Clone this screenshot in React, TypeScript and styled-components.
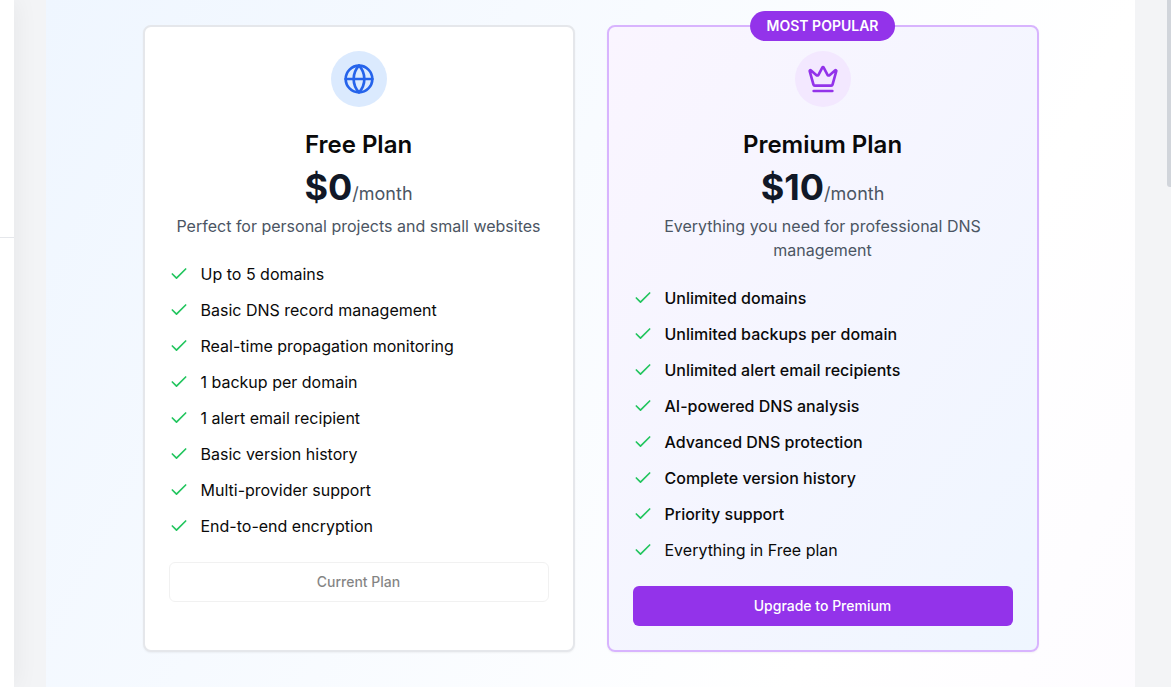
import React from "react";
import styled, { createGlobalStyle, css } from "styled-components";
import { Check, Crown, Globe } from "lucide-react";

const GlobalStyle = createGlobalStyle`
  *, *::before, *::after { box-sizing: border-box; }
  body {
    margin: 0;
    background: #f3f4f6;
    color: #0a0a0a;
    font-family: Inter, "Liberation Sans", sans-serif;
    font-size: 16px;
    line-height: 24px;
  }
`;

const Page = styled.div`
  display: flex;
  min-height: 100vh;
`;

const Sidebar = styled.aside`
  flex: 0 0 14px;
  background: #ffffff;
  box-shadow: 0 0 24px rgba(0, 0, 0, 0.08);
`;

const SidebarHeader = styled.div`
  height: 238px;
  border-bottom: 1px solid #e5e7eb;
`;

const Content = styled.main`
  flex: 1;
  display: flex;
  min-width: 0;
  padding: 0 32px;
`;

const PricingSection = styled.section`
  position: relative;
  flex: 1;
  padding: 25px 16px 32px;
  background: linear-gradient(117deg, #eff6ff 0, #ffffff 974px, #faf5ff 1948px);
`;

const PlanGrid = styled.div`
  display: grid;
  grid-template-columns: repeat(2, minmax(0, 1fr));
  gap: 32px;
  max-width: 896px;
  margin: 0 auto;
`;

const Card = styled.article<{ $featured?: boolean }>`
  position: relative;
  padding: 24px;
  border: 2px solid #e5e7eb;
  border-radius: 8px;
  background: #ffffff;
  box-shadow: 0 1px 2px rgba(0, 0, 0, 0.05);
  ${({ $featured }) =>
    $featured &&
    css`
      border-color: #d8b4fe;
      background: linear-gradient(to bottom right, #faf5ff, #eff6ff);
    `}
`;

const Badge = styled.span`
  position: absolute;
  top: -16px;
  left: 50%;
  transform: translateX(-50%);
  padding: 5px 17px;
  border-radius: 15px;
  background: #9333ea;
  color: #ffffff;
  font-size: 14px;
  font-weight: 600;
  line-height: 20px;
  white-space: nowrap;
`;

const CardHeader = styled.header`
  display: flex;
  flex-direction: column;
  align-items: center;
  text-align: center;
`;

const IconCircle = styled.div<{ $featured?: boolean }>`
  display: flex;
  padding: 12px;
  border-radius: 50%;
  background: ${({ $featured }) => ($featured ? "#f3e8ff" : "#dbeafe")};
  color: ${({ $featured }) => ($featured ? "#9333ea" : "#2563eb")};
`;

const PlanName = styled.h2`
  margin: 22px 0 6px;
  font-size: 24px;
  font-weight: 600;
  line-height: 32px;
`;

const Price = styled.p`
  margin: 0;
  color: #111827;
  font-size: 36px;
  font-weight: 700;
  line-height: 40px;
`;

const Period = styled.span`
  color: #4b5563;
  font-size: 18px;
  font-weight: 400;
`;

const Description = styled.p`
  margin: 0;
  color: #4b5563;
`;

const FeatureList = styled.ul`
  display: flex;
  flex-direction: column;
  gap: 12px;
  margin: 24px 0;
  padding: 0;
  list-style: none;
`;

const Feature = styled.li<{ $strong?: boolean }>`
  display: flex;
  align-items: center;
  gap: 12px;
  font-weight: ${({ $strong }) => ($strong ? 500 : 400)};

  svg {
    flex: none;
    color: #22c55e;
  }
`;

const PlanButton = styled.button`
  display: block;
  width: 100%;
  height: 40px;
  border: 0;
  border-radius: 6px;
  background: #9333ea;
  color: #ffffff;
  font-family: inherit;
  font-size: 14px;
  font-weight: 500;
  line-height: 20px;
  cursor: pointer;

  &:disabled {
    border: 1px solid #e5e5e5;
    background: #ffffff;
    color: #0a0a0a;
    opacity: 0.5;
    cursor: default;
  }
`;

const ScrollTrack = styled.div`
  flex: 0 0 4px;
`;

const ScrollThumb = styled.div`
  height: 187px;
  border-radius: 0 0 0 3px;
  background: #d1d5db;
`;

type FeatureItem = { label: string; strong?: boolean };

type Plan = {
  name: string;
  price: string;
  description: string;
  features: FeatureItem[];
  action: string;
  current?: boolean;
  featured?: boolean;
};

const plans: Plan[] = [
  {
    name: "Free Plan",
    price: "$0",
    description: "Perfect for personal projects and small websites",
    features: [
      { label: "Up to 5 domains" },
      { label: "Basic DNS record management" },
      { label: "Real-time propagation monitoring" },
      { label: "1 backup per domain" },
      { label: "1 alert email recipient" },
      { label: "Basic version history" },
      { label: "Multi-provider support" },
      { label: "End-to-end encryption" },
    ],
    action: "Current Plan",
    current: true,
  },
  {
    name: "Premium Plan",
    price: "$10",
    description: "Everything you need for professional DNS management",
    features: [
      { label: "Unlimited domains", strong: true },
      { label: "Unlimited backups per domain", strong: true },
      { label: "Unlimited alert email recipients", strong: true },
      { label: "AI-powered DNS analysis", strong: true },
      { label: "Advanced DNS protection", strong: true },
      { label: "Complete version history", strong: true },
      { label: "Priority support", strong: true },
      { label: "Everything in Free plan" },
    ],
    action: "Upgrade to Premium",
    featured: true,
  },
];

function PlanCard({ plan }: { plan: Plan }) {
  const Icon = plan.featured ? Crown : Globe;
  return (
    <Card $featured={plan.featured}>
      {plan.featured && <Badge>MOST POPULAR</Badge>}
      <CardHeader>
        <IconCircle $featured={plan.featured}>
          <Icon size={32} aria-hidden="true" />
        </IconCircle>
        <PlanName>{plan.name}</PlanName>
        <Price>
          {plan.price}
          <Period>/month</Period>
        </Price>
        <Description>{plan.description}</Description>
      </CardHeader>
      <FeatureList>
        {plan.features.map((feature) => (
          <Feature key={feature.label} $strong={feature.strong}>
            <Check size={20} aria-hidden="true" />
            <span>{feature.label}</span>
          </Feature>
        ))}
      </FeatureList>
      <PlanButton type="button" disabled={plan.current}>
        {plan.action}
      </PlanButton>
    </Card>
  );
}

export default function App() {
  return (
    <>
      <GlobalStyle />
      <Page>
        <Sidebar>
          <SidebarHeader />
        </Sidebar>
        <Content>
          <PricingSection>
            <PlanGrid>
              {plans.map((plan) => (
                <PlanCard key={plan.name} plan={plan} />
              ))}
            </PlanGrid>
          </PricingSection>
        </Content>
        <ScrollTrack aria-hidden="true">
          <ScrollThumb />
        </ScrollTrack>
      </Page>
    </>
  );
}
